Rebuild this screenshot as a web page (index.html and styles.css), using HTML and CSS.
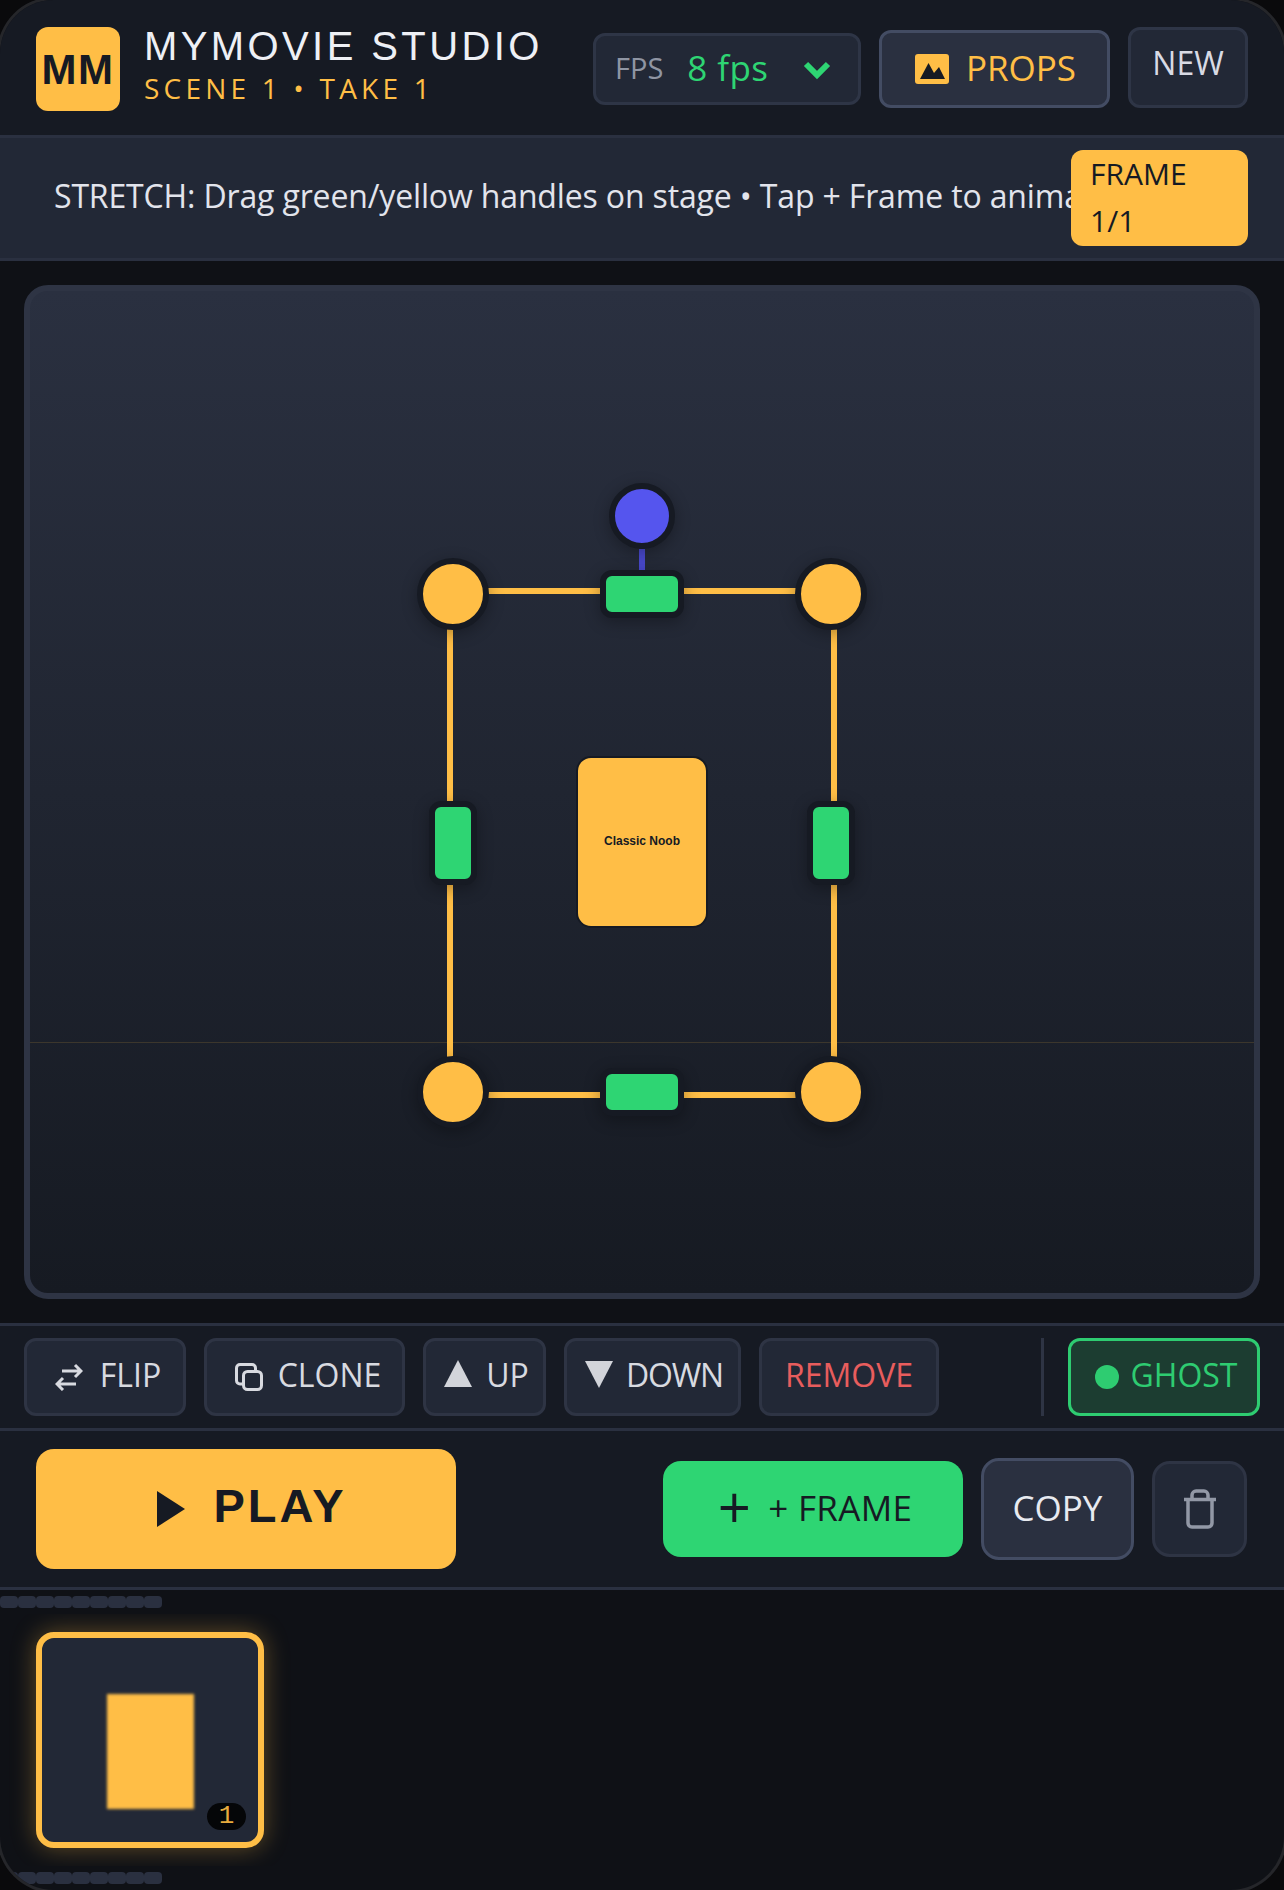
FILE: index.html
```html
<!DOCTYPE html>
<html lang="en">
<head>
  <meta charset="UTF-8">
  <meta name="viewport" content="width=device-width, initial-scale=1.0">
  <title>MyMovie Studio</title>
  <link rel="stylesheet" href="styles.css">
</head>
<body>
<div class="phone">
  <!-- Header -->
  <header class="topbar">
    <div class="logo">MM</div>
    <div class="brand">
      <h1>MYMOVIE STUDIO</h1>
      <p>SCENE 1 • TAKE 1</p>
    </div>
    <div class="fps">
      <span class="fps-label">FPS</span>
      <span class="fps-value">8 fps</span>
      <svg width="30" height="22" viewBox="0 0 30 22"><path d="M4 6l11 11L26 6" fill="none" stroke="#2ed573" stroke-width="6"/></svg>
    </div>
    <button class="btn-props">
      <svg width="34" height="30" viewBox="0 0 34 30"><rect width="34" height="30" rx="3" fill="#ffbe46"/><path d="M5 25L13.500 9 19 19l5-6 6 12z" fill="#161a23"/></svg>
      PROPS
    </button>
    <button class="btn-new">NEW</button>
  </header>

  <!-- Hint -->
  <div class="hint">
    <div class="hint-text">STRETCH: Drag green/yellow handles on stage • Tap + Frame to animate</div>
    <div class="frame-badge">FRAME<br>1/1</div>
  </div>

  <!-- Stage -->
  <main class="stage-wrap">
    <div class="stage">
      <div class="ground"></div>
      <div class="selection">
        <div class="stem"></div>
        <div class="handle rotate"></div>
        <div class="handle corner tl"></div>
        <div class="handle corner tr"></div>
        <div class="handle corner bl"></div>
        <div class="handle corner br"></div>
        <div class="handle side-h tm"></div>
        <div class="handle side-h bm"></div>
        <div class="handle side-v ml"></div>
        <div class="handle side-v mr"></div>
        <div class="actor">Classic Noob</div>
      </div>
    </div>
  </main>

  <!-- Tools -->
  <div class="tools">
    <button class="tool tool-flip">
      <svg width="28" height="28" viewBox="0 0 28 28" fill="none" stroke="#d8dae0" stroke-width="3"><path d="M7 8h19M20 2l6 6-6 6M21 21H2M8 15l-6 6 6 6"/></svg>
      FLIP
    </button>
    <button class="tool tool-clone">
      <svg width="28" height="28" viewBox="0 0 28 28" fill="none" stroke="#d8dae0" stroke-width="3"><path d="M7 21H5c-2 0-3.500-1.500-3.500-3.500V5C1.500 3 3 1.500 5 1.500h12c2 0 3.500 1.500 3.500 3.500v2"/><rect x="8.500" y="8.500" width="18" height="18" rx="4"/></svg>
      CLONE
    </button>
    <button class="tool tool-up"><span class="tri tri-up"></span>UP</button>
    <button class="tool tool-down"><span class="tri tri-down"></span>DOWN</button>
    <button class="tool tool-remove">REMOVE</button>
    <div class="divider"></div>
    <button class="tool tool-ghost"><span class="dot"></span>GHOST</button>
  </div>

  <!-- Actions -->
  <div class="actions">
    <button class="btn-play"><span class="play-icon"></span><span class="play-text">PLAY</span></button>
    <button class="btn-frame"><span class="plus">+</span>+ FRAME</button>
    <button class="btn-copy">COPY</button>
    <button class="btn-trash">
      <svg width="32" height="40" viewBox="0 0 32 40" fill="none" stroke="#9298a6" stroke-width="3.500"><path d="M0 10.500h32M8 9V6c0-2 2-4 4-4h8c2 0 4 2 4 4v3M4 11v23c0 2 1.500 4 4 4h16c2.500 0 4-2 4-4V11"/></svg>
    </button>
  </div>

  <!-- Timeline -->
  <div class="timeline">
    <div class="pills">
      <i></i><i></i><i></i><i></i><i></i><i></i><i></i><i></i><i></i>
    </div>
    <div class="thumbs">
      <div class="thumb">
        <div class="thumb-fig"></div>
        <span class="thumb-num">1</span>
      </div>
    </div>
    <div class="pills">
      <i></i><i></i><i></i><i></i><i></i><i></i><i></i><i></i><i></i>
    </div>
  </div>
</div>
</body>
</html>
```
FILE: styles.css
```css
* {
  box-sizing: border-box;
}

html, body {
  margin: 0;
  padding: 0;
  background-color: #0a0a0c;
}

body {
  font-family: "Open Sans", "Liberation Sans", Arial, sans-serif;
  font-stretch: 88%;
  color: #e8eaf0;
  overflow: hidden;
}

button {
  font-family: inherit;
  font-stretch: inherit;
  cursor: pointer;
  margin: 0;
}

.phone {
  position: relative;
  width: 1284px;
  height: 1890px;
  border-radius: 54px;
  overflow: hidden;
  background-color: #0f1116;
  box-shadow: 0 0 0 3px #25262a;
  display: flex;
  flex-direction: column;
}

/* Header */
.topbar {
  height: 138px;
  flex: none;
  background-color: #161a23;
  border-bottom: 3px solid #2a3040;
  display: flex;
  align-items: flex-start;
  padding: 27px 36px 0;
}

.logo {
  width: 84px;
  height: 84px;
  flex: none;
  background-color: #ffbe46;
  border-radius: 12px;
  color: #161a23;
  font-family: "Liberation Sans", Arial, sans-serif;
  font-stretch: normal;
  font-weight: 700;
  font-size: 42px;
  letter-spacing: 1.500px;
  padding-top: 2px;
  display: flex;
  align-items: center;
  justify-content: center;
}

.brand {
  margin-left: 24px;
  width: 449px;
  flex: none;
}

.brand h1 {
  margin: -5px 0 0;
  font-family: "Liberation Sans", Arial, sans-serif;
  font-stretch: normal;
  font-weight: 400;
  font-size: 40px;
  line-height: 48px;
  letter-spacing: 3.400px;
  color: #eef0f5;
}

.brand p {
  margin: 1px 0 0;
  font-size: 28px;
  line-height: 34px;
  letter-spacing: 4.200px;
  color: #ffbe46;
}

.fps {
  width: 268px;
  height: 72px;
  margin-top: 6px;
  flex: none;
  background-color: #222836;
  border: 3px solid #2e3546;
  border-radius: 12px;
  display: flex;
  align-items: center;
  padding: 0 26px 4px 19px;
}

.fps-label {
  font-size: 29px;
  color: #8f95a3;
}

.fps-value {
  margin-left: 24px;
  font-size: 35px;
  letter-spacing: 0.400px;
  color: #2ed573;
}

.fps svg {
  margin-left: auto;
  margin-top: 4px;
}

.btn-props {
  width: 231px;
  height: 78px;
  margin: 3px 0 0 18px;
  flex: none;
  background-color: #2a3040;
  border: 3px solid #434c63;
  border-radius: 12px;
  color: #ffbe46;
  font-size: 35px;
  display: flex;
  align-items: center;
  justify-content: center;
  gap: 17px;
  padding: 0 0 4px 2px;
}

.btn-props svg {
  margin-top: 4px;
}

.btn-new {
  width: 120px;
  height: 81px;
  margin-left: 18px;
  flex: none;
  background-color: #222836;
  border: 3px solid #2e3546;
  border-radius: 12px;
  color: #d8dae4;
  font-size: 32px;
  padding: 0 0 10px;
}

/* Hint */
.hint {
  height: 123px;
  flex: none;
  background-color: #222836;
  border-bottom: 3px solid #2a3040;
  display: flex;
  align-items: center;
  padding: 0 36px 0 54px;
}

.hint-text {
  flex: 1;
  min-width: 0;
  white-space: nowrap;
  overflow: hidden;
  font-size: 32px;
  letter-spacing: -0.150px;
  line-height: 44px;
  padding-bottom: 4px;
  color: #e2e4ec;
}

.frame-badge {
  width: 177px;
  height: 96px;
  flex: none;
  background-color: #ffbe46;
  border-radius: 12px;
  color: #161a23;
  font-size: 30px;
  line-height: 47px;
  padding: 0 19px;
}

/* Stage */
.stage-wrap {
  height: 1062px;
  flex: none;
  padding: 24px 24px 24px;
}

.stage {
  position: relative;
  height: 100%;
  border: 6px solid #2e3444;
  border-radius: 24px;
  background: linear-gradient(#2a3040, #161a22);
  overflow: hidden;
}

.ground {
  position: absolute;
  left: 0;
  right: 0;
  top: 751px;
  height: 1px;
  background-color: rgba(255, 190, 70, 0.15);
}

.selection {
  position: absolute;
  left: 417px;
  top: 297px;
  width: 390px;
  height: 510px;
  border: 6px solid #ffbe46;
}

.handle {
  position: absolute;
  border: 6px solid #161a23;
  box-shadow: 0 4px 16px rgba(0, 0, 0, 0.3);
}

.corner {
  width: 72px;
  height: 72px;
  border-radius: 50%;
  background-color: #ffbe46;
}

.tl { left: -36px; top: -36px; }
.tr { right: -36px; top: -36px; }
.bl { left: -36px; bottom: -36px; }
.br { right: -36px; bottom: -36px; }

.side-h {
  width: 84px;
  height: 48px;
  border-radius: 12px;
  background-color: #2ed573;
  left: 147px;
}

.tm { top: -24px; }
.bm { bottom: -24px; }

.side-v {
  width: 48px;
  height: 84px;
  border-radius: 12px;
  background-color: #2ed573;
  top: 207px;
}

.ml { left: -24px; }
.mr { right: -24px; }

.rotate {
  width: 66px;
  height: 66px;
  border-radius: 50%;
  background-color: #5555ee;
  left: 156px;
  top: -111px;
}

.stem {
  position: absolute;
  width: 6px;
  height: 24px;
  left: 186px;
  top: -45px;
  background-color: #4949cc;
}

.actor {
  position: absolute;
  left: 123px;
  top: 162px;
  width: 132px;
  height: 172px;
  background-color: #ffbe46;
  border: 2px solid #161a23;
  border-radius: 15px;
  display: flex;
  align-items: center;
  justify-content: center;
  font-family: "Liberation Sans", Arial, sans-serif;
  font-stretch: normal;
  font-weight: 700;
  font-size: 12px;
  color: #161a23;
  padding-bottom: 2px;
}

/* Tools */
.tools {
  height: 105px;
  flex: none;
  background-color: #161a23;
  border-top: 3px solid #2a3040;
  display: flex;
  align-items: center;
  gap: 18px;
  padding: 0 24px;
}

.tool {
  height: 78px;
  flex: none;
  background-color: #222836;
  border: 3px solid #2e3444;
  border-radius: 12px;
  color: #d8dae0;
  font-size: 32px;
  display: flex;
  align-items: center;
  justify-content: center;
  padding: 0 0 5px;
}

.tool-flip { width: 162px; gap: 17px; padding-left: 6px; }
.tool-clone { width: 201px; gap: 15px; padding-left: 7px; }
.tool-up { width: 123px; gap: 14px; padding-left: 4px; }
.tool-down { width: 177px; gap: 13px; padding-left: 3px; letter-spacing: -1.200px; }
.tool-remove { width: 180px; color: #e85d5d; }

.tool svg, .tool .dot {
  margin-top: 5px;
}

.tool .tri-up {
  margin-top: -2px;
}

.tool-ghost {
  width: 192px;
  background-color: #1c3d31;
  border-color: #2ecc71;
  color: #2ecc71;
  gap: 12px;
  padding-left: 4px;
}

.tri {
  width: 0;
  height: 0;
  border-left: 14px solid transparent;
  border-right: 14px solid transparent;
}

.tri-up {
  border-bottom: 27px solid #d2d4da;
}

.tri-down {
  border-top: 27px solid #d2d4da;
  margin-top: -1px;
}

.divider {
  width: 3px;
  height: 78px;
  margin-left: 84px;
  margin-right: 6px;
  background-color: #2e3444;
  flex: none;
}

.dot {
  width: 24px;
  height: 24px;
  border-radius: 50%;
  background-color: #2ecc71;
}

/* Actions */
.actions {
  height: 162px;
  flex: none;
  background-color: #161a23;
  border-top: 3px solid #2a3040;
  border-bottom: 3px solid #2a3040;
  display: flex;
  align-items: center;
  padding: 0 36px;
}

.btn-play {
  width: 420px;
  height: 120px;
  flex: none;
  background-color: #ffbe46;
  border: none;
  border-radius: 18px;
  color: #161a23;
  display: flex;
  align-items: center;
  justify-content: center;
  gap: 28px;
  padding: 0 0 0 12px;
  margin-right: 207px;
}

.play-icon {
  width: 0;
  height: 0;
  border-top: 18px solid transparent;
  border-bottom: 18px solid transparent;
  border-left: 28px solid #161a23;
}

.play-text {
  font-family: "Liberation Sans", Arial, sans-serif;
  font-stretch: normal;
  font-weight: 700;
  font-size: 47px;
  letter-spacing: 3px;
  margin-top: -8px;
}

.btn-frame {
  width: 300px;
  height: 96px;
  flex: none;
  background-color: #2ed573;
  border: none;
  border-radius: 18px;
  color: #161a23;
  font-size: 35px;
  letter-spacing: 0.300px;
  display: flex;
  align-items: center;
  justify-content: center;
  gap: 17px;
  padding: 0 0 4px 4px;
}

.plus {
  font-size: 58px;
  line-height: 48px;
}

.btn-copy {
  width: 153px;
  height: 102px;
  margin-left: 18px;
  flex: none;
  background-color: #2a3040;
  border: 3px solid #434c63;
  border-radius: 18px;
  color: #e8eaf0;
  font-size: 35px;
  padding: 0 0 4px;
}

.btn-trash {
  width: 95px;
  height: 96px;
  margin-left: 18px;
  flex: none;
  background-color: #222836;
  border: 3px solid #2e3444;
  border-radius: 18px;
  display: flex;
  align-items: center;
  justify-content: center;
  padding: 0;
}

/* Timeline */
.timeline {
  flex: 1;
  padding-top: 6px;
}

.pills {
  display: flex;
  height: 12px;
}

.pills i {
  width: 18px;
  height: 12px;
  border-radius: 4px;
  background-color: #2a3040;
}

.thumbs {
  height: 252px;
  margin: 6px 0;
  padding: 18px 36px;
  overflow: hidden;
}

.thumb {
  position: relative;
  width: 228px;
  height: 216px;
  background-color: #222836;
  border: 6px solid #ffbe46;
  border-radius: 18px;
  box-shadow: 0 0 24px rgba(255, 190, 70, 0.35);
  display: flex;
  align-items: center;
  justify-content: center;
}

.thumb-fig {
  width: 87px;
  height: 115px;
  margin-top: 22px;
  background-color: #ffbe46;
  filter: blur(1.500px);
}

.thumb-num {
  position: absolute;
  right: 12px;
  bottom: 12px;
  width: 39px;
  height: 27px;
  background-color: #050608;
  border-radius: 14px;
  color: #e8ab3e;
  font-family: "Liberation Mono", monospace;
  font-size: 26px;
  line-height: 27px;
  text-align: center;
}
```
